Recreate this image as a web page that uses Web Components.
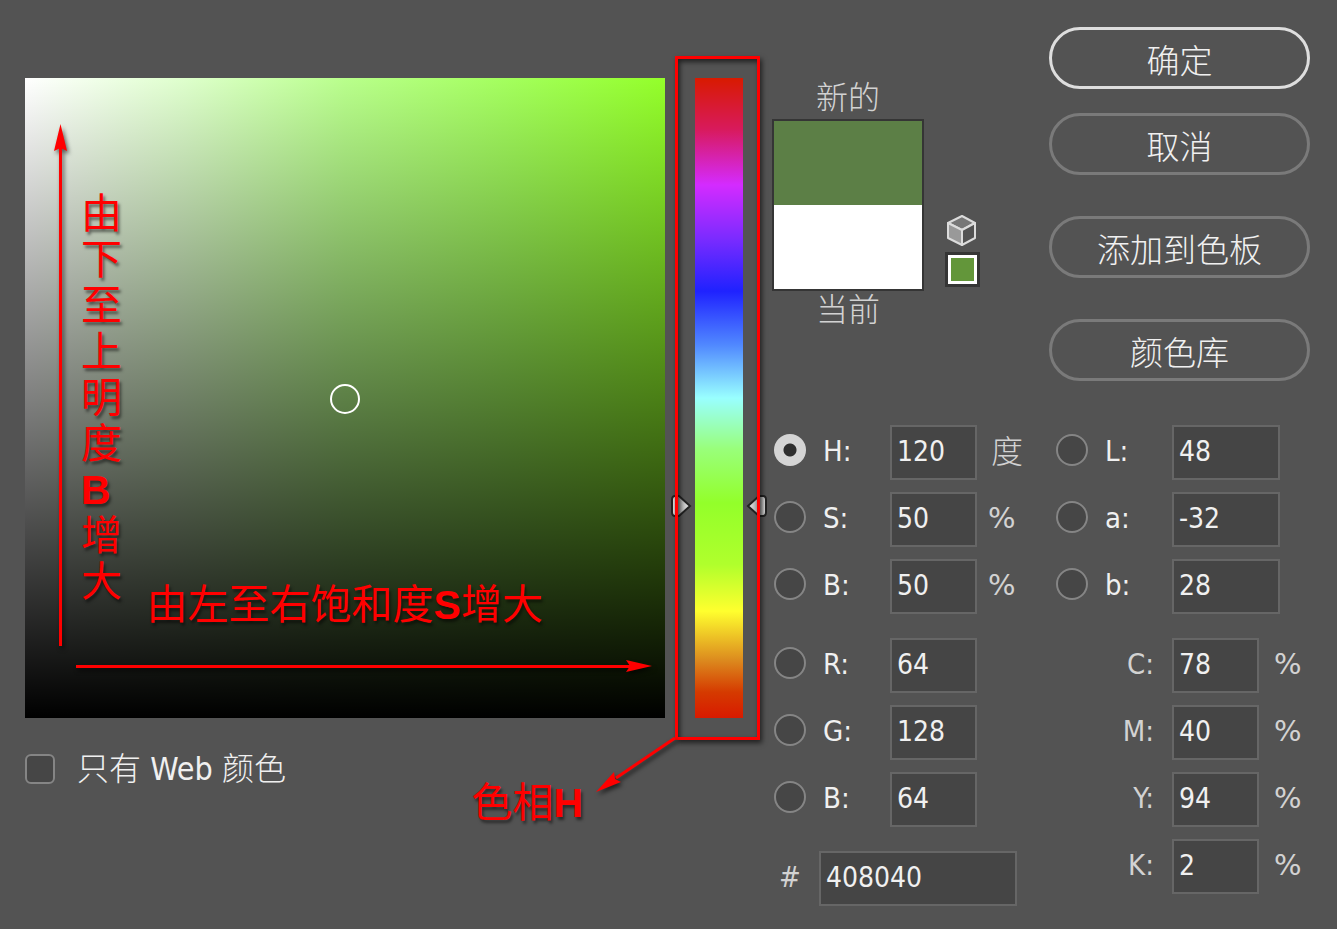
<!DOCTYPE html>
<html lang="zh-CN">
<head>
<meta charset="utf-8">
<title>拾色器</title>
<style>
  body {
    margin: 0;
    min-height: 100vh;
    background: #535353;
    color: #f0f0f0;
    font: 29px/40px "DejaVu Sans Condensed", "Noto Sans", "Noto Sans CJK SC", sans-serif;
    --cjk: "Noto Sans CJK SC", sans-serif;
    --muted: #d2d2d2;
    --line: #666;
    --well: #454545;
    --note: #f00;
  }
</style>
</head>
<body>
<color-dialog></color-dialog>
<script>
const define = (name, html, setup) => {
  const template = document.createElement('template');
  template.innerHTML = html;
  customElements.define(name, class extends HTMLElement {
    constructor() {
      super();
      this.attachShadow({ mode: 'open' }).append(template.content.cloneNode(true));
    }
    connectedCallback() { if (setup) setup(this, this.shadowRoot); }
  });
};

/* Red annotation text */
define('note-text', `
  <style>
    :host { display: block; color: var(--note); white-space: nowrap;
      font: 400 41px/46px "Liberation Sans", var(--cjk);
      text-shadow: 2px 3px 3px rgba(0,0,0,.5); }
    :host([vertical]) { display: grid; justify-items: start; width: 41px; }
    ::slotted(b) { font-weight: 700; }
  </style><slot></slot>`);

/* Saturation / brightness square */
define('color-field-map', `
  <style>
    :host { display: block; position: relative; aspect-ratio: 1;
      background:
        linear-gradient(to bottom, transparent, #000),
        linear-gradient(to right, #fff, #deffcc 25%, #b9ff8c 50%, #a4ff5e 75%, #94ff2a); }
    .marker { position: absolute; left: 50%; top: 50%; width: 30px; height: 30px;
      box-sizing: border-box; margin: -14px -15px; border: 2px solid #fff; border-radius: 50%; }
    svg { position: absolute; inset: 0; width: 100%; height: 100%; overflow: visible;
      filter: drop-shadow(2px 3px 2px rgba(0,0,0,.6)); }
    .up { position: absolute; left: 56px; top: 18%; margin-top: -2px; }
    .across { position: absolute; left: 19%; top: 79%; margin-top: -2px; }
  </style>
  <svg viewBox="0 0 640 640" fill="#f00" aria-hidden="true">
    <path d="M34 70h3v498h-3zM35.500 46l6.500 27-6.500-3-6.500 3z"/>
    <path d="M51 587h556v3H51zM627 588l-26 6 4-6-4-6z"/>
  </svg>
  <div class="marker"></div>
  <note-text class="up" vertical><span>由</span><span>下</span><span>至</span><span>上</span><span>明</span><span>度</span><b>B</b><span>增</span><span>大</span></note-text>
  <note-text class="across">由左至右饱和度<b>S</b>增大</note-text>`);

/* Hue strip with its handles and the annotation frame */
define('hue-strip', `
  <style>
    :host { display: block; position: relative;
      background: linear-gradient(to bottom, #d81a00, #d81a5c 8%, #d42bff 16.700%, #7c2bff 25%, #1f22ff 33.300%,
        #5088ff 41.700%, #99ffff 50%, #99ff7a 58%, #93ff2a 66.400%, #b0ff2c 76%, #ffff2e 83.300%,
        #dc8a1e 91%, #d53a00 96%, #d81a00); }
    .handle { position: absolute; top: 67%; margin-top: -13px; width: 22px; height: 24px; }
    .l { right: 100%; margin-right: 3px; }
    .r { left: 100%; margin-left: 3px; transform: scaleX(-1); }
    .frame { position: absolute; inset: -22px -17px -22px -20px; border: 3px solid var(--note);
      box-shadow: 2px 3px 5px rgba(0,0,0,.6), inset 2px 3px 5px rgba(0,0,0,.6); }
    .arrow { position: absolute; top: 100%; right: 100%; margin: 17px 15px 0 0; width: 86px; height: 62px;
      filter: drop-shadow(2px 3px 2px rgba(0,0,0,.6)); }
    note-text { position: absolute; top: 100%; right: 100%; margin: 62px 112px 0 0; }
  </style>
  <svg class="handle l" viewBox="0 0 22 24" aria-hidden="true">
    <defs><linearGradient id="g"><stop stop-color="#eee"/><stop offset=".35" stop-color="#999"/><stop offset="1" stop-color="#eee"/></linearGradient></defs>
    <path d="M5 2h4l11 10-11 10H5q-3 0-3-4V6q0-4 3-4z" fill="url(#g)" stroke="#222" stroke-width="2"/></svg>
  <svg class="handle r" viewBox="0 0 22 24" aria-hidden="true">
    <defs><linearGradient id="g"><stop stop-color="#999"/><stop offset=".35" stop-color="#ccc"/><stop offset="1" stop-color="#eee"/></linearGradient></defs>
    <path d="M5 2h4l11 10-11 10H5q-3 0-3-4V6q0-4 3-4z" fill="url(#g)" stroke="#222" stroke-width="2"/></svg>
  <div class="frame"></div>
  <svg class="arrow" viewBox="0 0 86 62" fill="#f00" aria-hidden="true">
    <path d="M81 3L22 43" stroke="#f00" stroke-width="3"/><path d="M2 57l18-20 1 7 6 3z"/></svg>
  <note-text>色相<b>H</b></note-text>`);

/* New / current colour comparison */
define('color-preview', `
  <style>
    :host { display: grid; grid-template-columns: 152px 36px; column-gap: 21px; align-items: end; }
    span { display: block; padding-bottom: 8px; color: var(--muted); text-align: center; font: 300 32px/32px var(--cjk); }
    .swatch { height: 168px; border: 2px solid #353535; background: linear-gradient(#5c7f46 50%, #fff 50%); }
    .web { width: 23px; height: 23px; background: #63963a; border: 3px solid #fff; outline: 3px solid #353535; }
    .chips { display: grid; gap: 8px; padding: 0 3px 7px; }
    svg { display: block; width: 32px; height: 34px; margin-left: -2px; }
  </style>
  <span>新的</span><i></i>
  <div class="swatch"></div>
  <div class="chips">
    <svg viewBox="0 0 32 34" stroke="#dcdcdc" stroke-width="2" stroke-linejoin="round" aria-hidden="true">
      <path d="M2 10l14-7 13 7-13 7z" fill="#777"/><path d="M2 10l14 7v15L2 25z" fill="#999"/><path d="M29 10l-13 7v15l13-7z" fill="#535353"/></svg>
    <div class="web"></div>
  </div>
  <span>当前</span>`);

/* Pill button */
define('dialog-button', `
  <style>
    :host { display: block; }
    button { display: block; width: 100%; height: 62px; padding: 2px 0 0; border: 3px solid #7a7a7a; border-radius: 31px;
      background: none; color: #f0f0f0; font: 300 33px/40px var(--cjk); }
    :host([primary]) button { border-color: #dedede; }
  </style>
  <button type="button"><slot></slot></button>`);

/* One channel: optional radio, label, value, unit */
define('channel-field', `
  <style>
    :host { display: grid; grid-template-columns: 32px 84px 87px 1fr; align-items: center; }
    :host([wide]) { grid-template-columns: 32px 84px 108px 1fr; }
    :host([hex]) { grid-template-columns: 5px 40px 198px 1fr; }
    .pick { appearance: none; width: 32px; height: 32px; margin: 0 0 6px; box-sizing: border-box;
      border: 2px solid #858585; border-radius: 50%; background: #464646; }
    .pick:checked { border: 0; background: radial-gradient(circle, #2e2e2e 6px, #d4d4d4 7px); }
    .pick[hidden] { display: block; visibility: hidden; }
    label { padding: 0 0 4px 17px; }
    :host([plain]) label { color: var(--muted); text-align: right; padding-right: 18px; }
    :host([hex]) label { color: var(--muted); padding-left: 0; }
    .value { width: 100%; height: 55px; box-sizing: border-box; border: 2px solid var(--line); border-radius: 0;
      padding: 0 5px 2px; background: var(--well); color: inherit; font: inherit; font-size: 28px; outline: 0; }
    span { padding: 0 0 4px 11px; color: var(--muted); font-family: "DejaVu Sans", sans-serif; }
    :host([plain]) span { padding-left: 15px; }
    :host([cjk]) span { font: 300 32px/40px var(--cjk); padding: 0 0 8px 14px; }
  </style>
  <input class="pick" type="radio" id="pick"><label></label><input class="value" type="text" id="value"><span><slot></slot></span>`,
  (host, root) => {
    const pick = root.querySelector('.pick');
    const label = root.querySelector('label');
    const value = root.querySelector('.value');
    const radio = !host.hasAttribute('plain') && !host.hasAttribute('hex');
    pick.hidden = !radio;
    pick.checked = host.hasAttribute('checked');
    label.textContent = host.getAttribute('label');
    label.htmlFor = radio ? 'pick' : 'value';
    value.value = host.getAttribute('value');
    value.setAttribute('aria-label', host.getAttribute('label'));
    pick.addEventListener('change', () => {
      for (const other of host.getRootNode().querySelectorAll('channel-field'))
        if (other !== host) other.shadowRoot.querySelector('.pick').checked = false;
    });
  });

define('check-option', `
  <style>
    :host { display: flex; align-items: center; gap: 22px; }
    input { appearance: none; width: 30px; height: 30px; box-sizing: border-box; margin: 0;
      border: 2px solid #858585; border-radius: 6px; background: #464646; }
    label { font: 300 32px/40px "DejaVu Sans Condensed", var(--cjk); }
  </style>
  <input type="checkbox" id="c"><label for="c"><slot></slot></label>`);

define('color-dialog', `
  <style>
    :host { display: grid; grid-template-columns: minmax(0, 1fr) 538px; column-gap: 29px; padding: 27px 27px 22px 25px; }
    .picker { display: grid; grid-template-columns: minmax(0, 1fr) 48px; align-content: start; column-gap: 30px; padding-top: 51px; }
    check-option { margin-top: 31px; }
    .top { display: grid; grid-template-columns: 1fr 261px; align-items: start; }
    color-preview { padding-top: 52px; }
    .buttons, .group { display: grid; }
    .buttons { gap: 24px; }
    .buttons > .spaced { margin-top: 17px; }
    .fields { display: grid; grid-template-columns: 1fr 254px; padding: 44px 0 0 2px; }
    .column { display: grid; gap: 24px; align-content: start; }
    .group { gap: 12px; align-content: start; }
  </style>
  <section class="picker">
    <color-field-map></color-field-map>
    <hue-strip></hue-strip>
    <check-option>只有 Web 颜色</check-option>
  </section>
  <section>
    <div class="top">
      <color-preview></color-preview>
      <div class="buttons">
        <dialog-button primary>确定</dialog-button>
        <dialog-button>取消</dialog-button>
        <dialog-button class="spaced">添加到色板</dialog-button>
        <dialog-button class="spaced">颜色库</dialog-button>
      </div>
    </div>
    <div class="fields">
      <div class="column">
        <div class="group">
          <channel-field checked cjk label="H:" value="120">度</channel-field>
          <channel-field label="S:" value="50">%</channel-field>
          <channel-field label="B:" value="50">%</channel-field>
        </div>
        <div class="group">
          <channel-field label="R:" value="64"></channel-field>
          <channel-field label="G:" value="128"></channel-field>
          <channel-field label="B:" value="64"></channel-field>
        </div>
        <channel-field hex label="#" value="408040"></channel-field>
      </div>
      <div class="column">
        <div class="group">
          <channel-field wide label="L:" value="48"></channel-field>
          <channel-field wide label="a:" value="-32"></channel-field>
          <channel-field wide label="b:" value="28"></channel-field>
        </div>
        <div class="group">
          <channel-field plain label="C:" value="78">%</channel-field>
          <channel-field plain label="M:" value="40">%</channel-field>
          <channel-field plain label="Y:" value="94">%</channel-field>
          <channel-field plain label="K:" value="2">%</channel-field>
        </div>
      </div>
    </div>
  </section>`);
</script>
</body>
</html>
